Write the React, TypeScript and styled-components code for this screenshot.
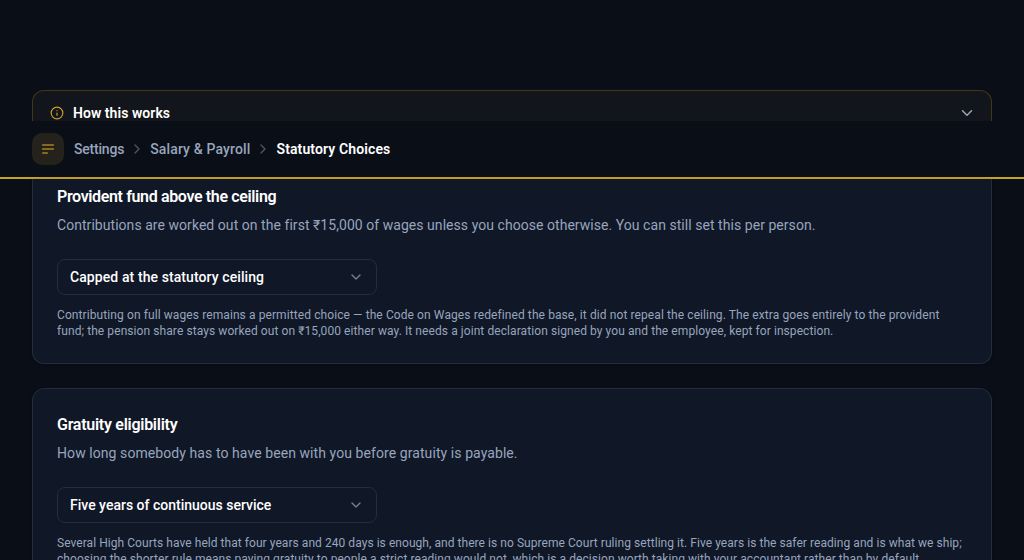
import type { ReactNode } from "react";
import styled, { createGlobalStyle } from "styled-components";
import { ChevronDown, ChevronRight, Info } from "lucide-react";

const GlobalStyle = createGlobalStyle`
  * {
    box-sizing: border-box;
    margin: 0;
  }
  body {
    background: #0a0e17;
    color: #ffffff;
    font-family: "Roboto", "Liberation Sans", sans-serif;
    overflow: hidden;
  }
`;

const Page = styled.div`
  display: flex;
  flex-direction: column;
  height: 560px;
  padding-top: 90px;
  overflow: hidden;
`;

const InfoPanel = styled.section`
  display: flex;
  flex-shrink: 0;
  align-items: flex-start;
  height: 31px;
  margin: 0 32px;
  padding: 12px 15px 0 17px;
  border: 1px solid #423817;
  border-bottom: none;
  border-radius: 12px 12px 0 0;
  background: #12151b;
  overflow: hidden;
`;

const InfoTitle = styled.h2`
  flex: 1;
  margin-left: 9px;
  font-size: 14px;
  font-weight: 600;
  line-height: 20px;
  letter-spacing: 0.05px;
`;

const InfoIcon = styled(Info)`
  margin-top: 3px;
  color: #c9a227;
`;

const PanelChevron = styled(ChevronDown)`
  margin-top: 1px;
  color: #97a5bd;
`;

const TopBar = styled.header`
  display: flex;
  flex-shrink: 0;
  align-items: center;
  height: 58px;
  padding: 0 32px;
  border-bottom: 2px solid #c9a227;
  background: #0a0e17;
`;

const MenuButton = styled.button`
  display: flex;
  align-items: center;
  justify-content: center;
  width: 32px;
  height: 32px;
  margin-right: 10px;
  padding: 0;
  border: none;
  border-radius: 10px;
  background: #25221b;
  color: #826a20;
`;

const Crumbs = styled.nav`
  display: flex;
  align-items: center;
  font-size: 14px;
  line-height: 20px;
`;

const Crumb = styled.span<{ $current?: boolean; $track: number }>`
  color: ${(props) => (props.$current ? "#ffffff" : "#97a5bd")};
  font-weight: ${(props) => (props.$current ? 600 : 500)};
  letter-spacing: ${(props) => props.$track}px;
  white-space: nowrap;
`;

const CrumbArrow = styled(ChevronRight)`
  margin: 0 5px;
  color: #4d5665;
`;

const Card = styled.section<{ $cut?: boolean }>`
  flex-shrink: 0;
  margin: 0 32px 24px;
  padding: ${(props) => (props.$cut ? "8px" : "26px")} 24px 24px;
  border: 1px solid #252d3d;
  border-top-width: ${(props) => (props.$cut ? 0 : 1)}px;
  border-radius: ${(props) => (props.$cut ? "0 0 12px 12px" : "12px")};
  background: #101727;
  box-shadow: 0 1px 3px rgba(0, 0, 0, 0.3);
`;

const CardTitle = styled.h3<{ $track: number }>`
  font-size: 16px;
  font-weight: 600;
  line-height: 20px;
  letter-spacing: ${(props) => props.$track}px;
`;

const CardText = styled.p<{ $track: number }>`
  margin-top: 8px;
  color: #97a5bd;
  font-size: 14px;
  line-height: 20px;
  letter-spacing: ${(props) => props.$track}px;
  white-space: nowrap;
`;

const Select = styled.button`
  display: flex;
  align-items: center;
  justify-content: space-between;
  width: 320px;
  height: 36px;
  margin-top: 24px;
  padding: 0 12px;
  border: 1px solid #252d3d;
  border-radius: 8px;
  background: #101727;
  color: #ffffff;
  font: inherit;
  font-size: 14px;
  font-weight: 500;
`;

const SelectLabel = styled.span<{ $track: number }>`
  letter-spacing: ${(props) => props.$track}px;
`;

const SelectChevron = styled(ChevronDown)`
  color: #78808d;
`;

const Note = styled.p`
  margin-top: 12px;
  color: #97a5bd;
  font-size: 12px;
  line-height: 16px;
`;

const NoteLine = styled.span<{ $track: number }>`
  display: block;
  letter-spacing: ${(props) => props.$track}px;
  white-space: nowrap;
`;

type ChoiceProps = {
  title: string;
  text: string;
  value: string;
  tracks: [number, number, number];
  cut?: boolean;
  children: ReactNode;
};

function Choice({ title, text, value, tracks, cut, children }: ChoiceProps) {
  return (
    <Card $cut={cut}>
      <CardTitle $track={tracks[0]}>{title}</CardTitle>
      <CardText $track={tracks[1]}>{text}</CardText>
      <Select type="button">
        <SelectLabel $track={tracks[2]}>{value}</SelectLabel>
        <SelectChevron size={16} />
      </Select>
      <Note>{children}</Note>
    </Card>
  );
}

export default function App() {
  return (
    <>
      <GlobalStyle />
      <Page>
        <InfoPanel>
          <InfoIcon size={14} />
          <InfoTitle>How this works</InfoTitle>
          <PanelChevron size={18} />
        </InfoPanel>
        <TopBar>
          <MenuButton type="button" aria-label="Menu">
            <svg width="12" height="10" viewBox="0 0 12 10" fill="currentColor">
              <rect width="12" height="2" rx="0.4" />
              <rect y="4" width="12" height="2" rx="0.4" />
              <rect y="8" width="6" height="2" rx="0.4" />
            </svg>
          </MenuButton>
          <Crumbs>
            <Crumb $track={-0.2}>Settings</Crumb>
            <CrumbArrow size={16} />
            <Crumb $track={0.14}>Salary &amp; Payroll</Crumb>
            <CrumbArrow size={16} />
            <Crumb $current $track={0.12}>
              Statutory Choices
            </Crumb>
          </Crumbs>
        </TopBar>
        <Choice
          cut
          title="Provident fund above the ceiling"
          text="Contributions are worked out on the first ₹15,000 of wages unless you choose otherwise. You can still set this per person."
          value="Capped at the statutory ceiling"
          tracks={[-0.36, 0.047, 0.09]}
        >
          <NoteLine $track={0.094}>
            Contributing on full wages remains a permitted choice — the Code on
            Wages redefined the base, it did not repeal the ceiling. The extra
            goes entirely to the provident
          </NoteLine>
          <NoteLine $track={0.08}>
            fund; the pension share stays worked out on ₹15,000 either way. It
            needs a joint declaration signed by you and the employee, kept for
            inspection.
          </NoteLine>
        </Choice>
        <Choice
          title="Gratuity eligibility"
          text="How long somebody has to have been with you before gratuity is payable."
          value="Five years of continuous service"
          tracks={[-0.27, 0.077, 0]}
        >
          <NoteLine $track={0.052}>
            Several High Courts have held that four years and 240 days is
            enough, and there is no Supreme Court ruling settling it. Five years
            is the safer reading and is what we ship;
          </NoteLine>
          <NoteLine $track={0.066}>
            choosing the shorter rule means paying gratuity to people a strict
            reading would not, which is a decision worth taking with your
            accountant rather than by default.
          </NoteLine>
        </Choice>
      </Page>
    </>
  );
}
